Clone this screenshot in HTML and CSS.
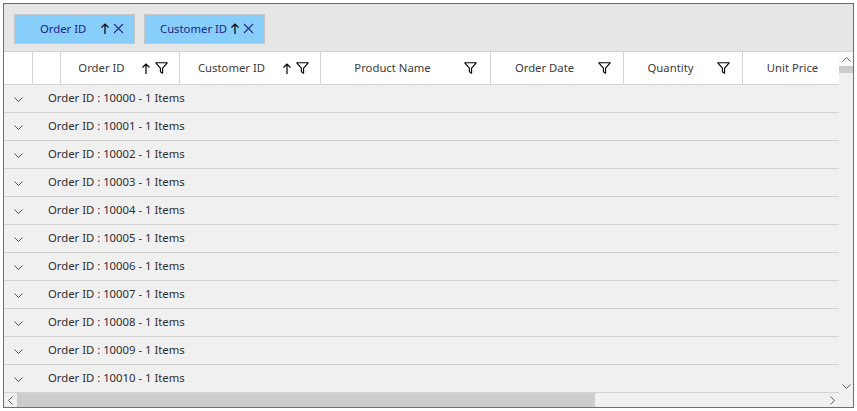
FILE: index.html
```html
<!DOCTYPE html>
<html>
<head>
<meta charset="utf-8">
<link rel="stylesheet" href="styles.css">
</head>
<body>
<div class="grid">
  <div class="groupbar">
    <div class="chip chip-a"><span class="chip-text">Order ID</span>
      <svg class="up" width="8" height="11" viewBox="0 0 8 11"><path d="M4 11V1M0.5 4.5L4 1L7.5 4.5" fill="none" stroke="#000" stroke-width="1.2"/></svg>
      <svg class="x" width="11" height="11" viewBox="0 0 11 11"><path d="M1 1L10 10M10 1L1 10" fill="none" stroke="#1f2f8f" stroke-width="1.1"/></svg>
    </div>
    <div class="chip chip-b"><span class="chip-text">Customer ID</span>
      <svg class="up" width="8" height="11" viewBox="0 0 8 11"><path d="M4 11V1M0.5 4.5L4 1L7.5 4.5" fill="none" stroke="#000" stroke-width="1.2"/></svg>
      <svg class="x" width="11" height="11" viewBox="0 0 11 11"><path d="M1 1L10 10M10 1L1 10" fill="none" stroke="#1f2f8f" stroke-width="1.1"/></svg>
    </div>
  </div>
  <div class="body">
    <div class="main">
      <div class="header">
        <div class="hcell c-ind1"></div>
        <div class="hcell c-ind2"></div>
        <div class="hcell c-oid"><span class="htext">Order ID</span>
          <svg class="up" width="8" height="11" viewBox="0 0 8 11"><path d="M4 11V1M0.5 4.5L4 1L7.5 4.5" fill="none" stroke="#000" stroke-width="1.2"/></svg>
          <svg class="filter" width="13" height="12" viewBox="0 0 13 12"><path d="M0.8 0.8H12.2L7.6 6.2V11.2L5.4 9.8V6.2Z" fill="none" stroke="#000" stroke-width="1.1" stroke-linejoin="round"/></svg>
        </div>
        <div class="hcell c-cid"><span class="htext">Customer ID</span>
          <svg class="up" width="8" height="11" viewBox="0 0 8 11"><path d="M4 11V1M0.5 4.5L4 1L7.5 4.5" fill="none" stroke="#000" stroke-width="1.2"/></svg>
          <svg class="filter" width="13" height="12" viewBox="0 0 13 12"><path d="M0.8 0.8H12.2L7.6 6.2V11.2L5.4 9.8V6.2Z" fill="none" stroke="#000" stroke-width="1.1" stroke-linejoin="round"/></svg>
        </div>
        <div class="hcell c-pn"><span class="htext">Product Name</span>
          <svg class="filter" width="13" height="12" viewBox="0 0 13 12"><path d="M0.8 0.8H12.2L7.6 6.2V11.2L5.4 9.8V6.2Z" fill="none" stroke="#000" stroke-width="1.1" stroke-linejoin="round"/></svg>
        </div>
        <div class="hcell c-od"><span class="htext">Order Date</span>
          <svg class="filter" width="13" height="12" viewBox="0 0 13 12"><path d="M0.8 0.8H12.2L7.6 6.2V11.2L5.4 9.8V6.2Z" fill="none" stroke="#000" stroke-width="1.1" stroke-linejoin="round"/></svg>
        </div>
        <div class="hcell c-qty"><span class="htext">Quantity</span>
          <svg class="filter" width="13" height="12" viewBox="0 0 13 12"><path d="M0.8 0.8H12.2L7.6 6.2V11.2L5.4 9.8V6.2Z" fill="none" stroke="#000" stroke-width="1.1" stroke-linejoin="round"/></svg>
        </div>
        <div class="hcell c-up"><span class="htext">Unit Price</span></div>
      </div>
      <div class="rows">
        <div class="row"><span class="exp"><svg width="9" height="5" viewBox="0 0 9 5"><path d="M0.5 0.5L4.5 4.5L8.5 0.5" fill="none" stroke="#555" stroke-width="1"/></svg></span><span class="rtext">Order ID : 10000 - 1 Items</span></div>
        <div class="row"><span class="exp"><svg width="9" height="5" viewBox="0 0 9 5"><path d="M0.5 0.5L4.5 4.5L8.5 0.5" fill="none" stroke="#555" stroke-width="1"/></svg></span><span class="rtext">Order ID : 10001 - 1 Items</span></div>
        <div class="row"><span class="exp"><svg width="9" height="5" viewBox="0 0 9 5"><path d="M0.5 0.5L4.5 4.5L8.5 0.5" fill="none" stroke="#555" stroke-width="1"/></svg></span><span class="rtext">Order ID : 10002 - 1 Items</span></div>
        <div class="row"><span class="exp"><svg width="9" height="5" viewBox="0 0 9 5"><path d="M0.5 0.5L4.5 4.5L8.5 0.5" fill="none" stroke="#555" stroke-width="1"/></svg></span><span class="rtext">Order ID : 10003 - 1 Items</span></div>
        <div class="row"><span class="exp"><svg width="9" height="5" viewBox="0 0 9 5"><path d="M0.5 0.5L4.5 4.5L8.5 0.5" fill="none" stroke="#555" stroke-width="1"/></svg></span><span class="rtext">Order ID : 10004 - 1 Items</span></div>
        <div class="row"><span class="exp"><svg width="9" height="5" viewBox="0 0 9 5"><path d="M0.5 0.5L4.5 4.5L8.5 0.5" fill="none" stroke="#555" stroke-width="1"/></svg></span><span class="rtext">Order ID : 10005 - 1 Items</span></div>
        <div class="row"><span class="exp"><svg width="9" height="5" viewBox="0 0 9 5"><path d="M0.5 0.5L4.5 4.5L8.5 0.5" fill="none" stroke="#555" stroke-width="1"/></svg></span><span class="rtext">Order ID : 10006 - 1 Items</span></div>
        <div class="row"><span class="exp"><svg width="9" height="5" viewBox="0 0 9 5"><path d="M0.5 0.5L4.5 4.5L8.5 0.5" fill="none" stroke="#555" stroke-width="1"/></svg></span><span class="rtext">Order ID : 10007 - 1 Items</span></div>
        <div class="row"><span class="exp"><svg width="9" height="5" viewBox="0 0 9 5"><path d="M0.5 0.5L4.5 4.5L8.5 0.5" fill="none" stroke="#555" stroke-width="1"/></svg></span><span class="rtext">Order ID : 10008 - 1 Items</span></div>
        <div class="row"><span class="exp"><svg width="9" height="5" viewBox="0 0 9 5"><path d="M0.5 0.5L4.5 4.5L8.5 0.5" fill="none" stroke="#555" stroke-width="1"/></svg></span><span class="rtext">Order ID : 10009 - 1 Items</span></div>
        <div class="row"><span class="exp"><svg width="9" height="5" viewBox="0 0 9 5"><path d="M0.5 0.5L4.5 4.5L8.5 0.5" fill="none" stroke="#555" stroke-width="1"/></svg></span><span class="rtext">Order ID : 10010 - 1 Items</span></div>
      </div>
      <div class="hscroll">
        <span class="sbtn"><svg width="5" height="9" viewBox="0 0 5 9"><path d="M4.5 0.5L0.5 4.5L4.5 8.5" fill="none" stroke="#606060" stroke-width="1"/></svg></span>
        <div class="htrack"><div class="hthumb"></div></div>
        <span class="sbtn"><svg width="5" height="9" viewBox="0 0 5 9"><path d="M0.5 0.5L4.5 4.5L0.5 8.5" fill="none" stroke="#606060" stroke-width="1"/></svg></span>
      </div>
    </div>
    <div class="vscroll">
      <span class="vbtn top"><svg width="9" height="5" viewBox="0 0 9 5"><path d="M0.5 4.5L4.5 0.5L8.5 4.5" fill="none" stroke="#606060" stroke-width="1"/></svg></span>
      <div class="vthumb"></div>
      <div class="vtrack"></div>
      <span class="vbtn bottom"><svg width="9" height="5" viewBox="0 0 9 5"><path d="M0.5 0.5L4.5 4.5L8.5 0.5" fill="none" stroke="#606060" stroke-width="1"/></svg></span>
      <div class="corner"></div>
    </div>
  </div>
</div>
</body>
</html>
```
FILE: styles.css
```css
* { box-sizing: border-box; }
html, body { margin: 0; padding: 0; background: #fff; }
body { padding: 3px; font-family: "Noto Sans", "Open Sans", sans-serif; font-size: 11.3px; color: #333; }

.grid {
  width: 851px;
  height: 405px;
  border: 1px solid #6e6e6e;
  display: flex;
  flex-direction: column;
  background: #f0f0f0;
}

.groupbar {
  height: 48px;
  flex: none;
  background: #e6e6e6;
  border-bottom: 1px solid #d4d4d4;
  padding: 10px 0 0 10px;
  display: flex;
  align-items: flex-start;
  gap: 9px;
}
.chip {
  width: 121px;
  height: 30px;
  background: #87cefa;
  border: 1px solid #c6c6c6;
  display: flex;
  align-items: center;
  padding-right: 10px;
  padding-bottom: 2px;
  color: #23238c;
}
.chip-a { padding-left: 25px; }
.chip-b { padding-left: 15px; }
.chip-text { white-space: nowrap; margin-right: 3px; }
.chip .up { margin-left: auto; margin-right: 4px; }

.body { flex: 1; display: flex; min-height: 0; }
.main { width: 835px; display: flex; flex-direction: column; }

.header {
  height: 33px;
  background: #fff;
  border-bottom: 1px solid #d4d4d4;
  display: flex;
  flex: none;
}
.hcell {
  height: 32px;
  border-right: 1px solid #d4d4d4;
  display: flex;
  align-items: center;
  color: #3a3a3a;
}
.htext { flex: 1; text-align: center; white-space: nowrap; padding-bottom: 2px; }
.c-ind1 { width: 29px; }
.c-ind2 { width: 28px; }
.c-oid { width: 119px; padding-right: 11px; }
.c-cid { width: 141px; padding-right: 11px; }
.c-pn { width: 170px; padding-right: 13px; }
.c-od { width: 133px; padding-right: 12px; }
.c-qty { width: 119px; padding-right: 12px; }
.c-up { width: 96px; border-right: none; padding-left: 3px; }
.hcell .up { margin-right: 5px; }

.rows { flex: none; }
.row {
  height: 28px;
  border-bottom: 1px solid #d2d2d2;
  display: flex;
  align-items: center;
  background: #f0f0f0;
}
.exp { width: 29px; display: flex; justify-content: center; align-items: center; padding-top: 2px; }
.rtext { margin-left: 15px; color: #2e2e2e; white-space: nowrap; padding-bottom: 2px; }

.hscroll {
  height: 14px;
  display: flex;
  background: #f0f0f0;
}
.sbtn { width: 13px; display: flex; align-items: center; justify-content: center; }
.htrack { flex: 1; }
.hthumb { width: 578px; height: 100%; background: #cdcdcd; }

.vscroll {
  width: 14px;
  display: flex;
  flex-direction: column;
  background: #f0f0f0;
}
.vbtn { height: 14px; display: flex; align-items: center; justify-content: center; flex: none; }
.vbtn.top { background: #fafafa; }
.vthumb { height: 7px; background: #cdcdcd; flex: none; }
.vtrack { flex: 1; }
.corner { height: 14px; flex: none; }
```
